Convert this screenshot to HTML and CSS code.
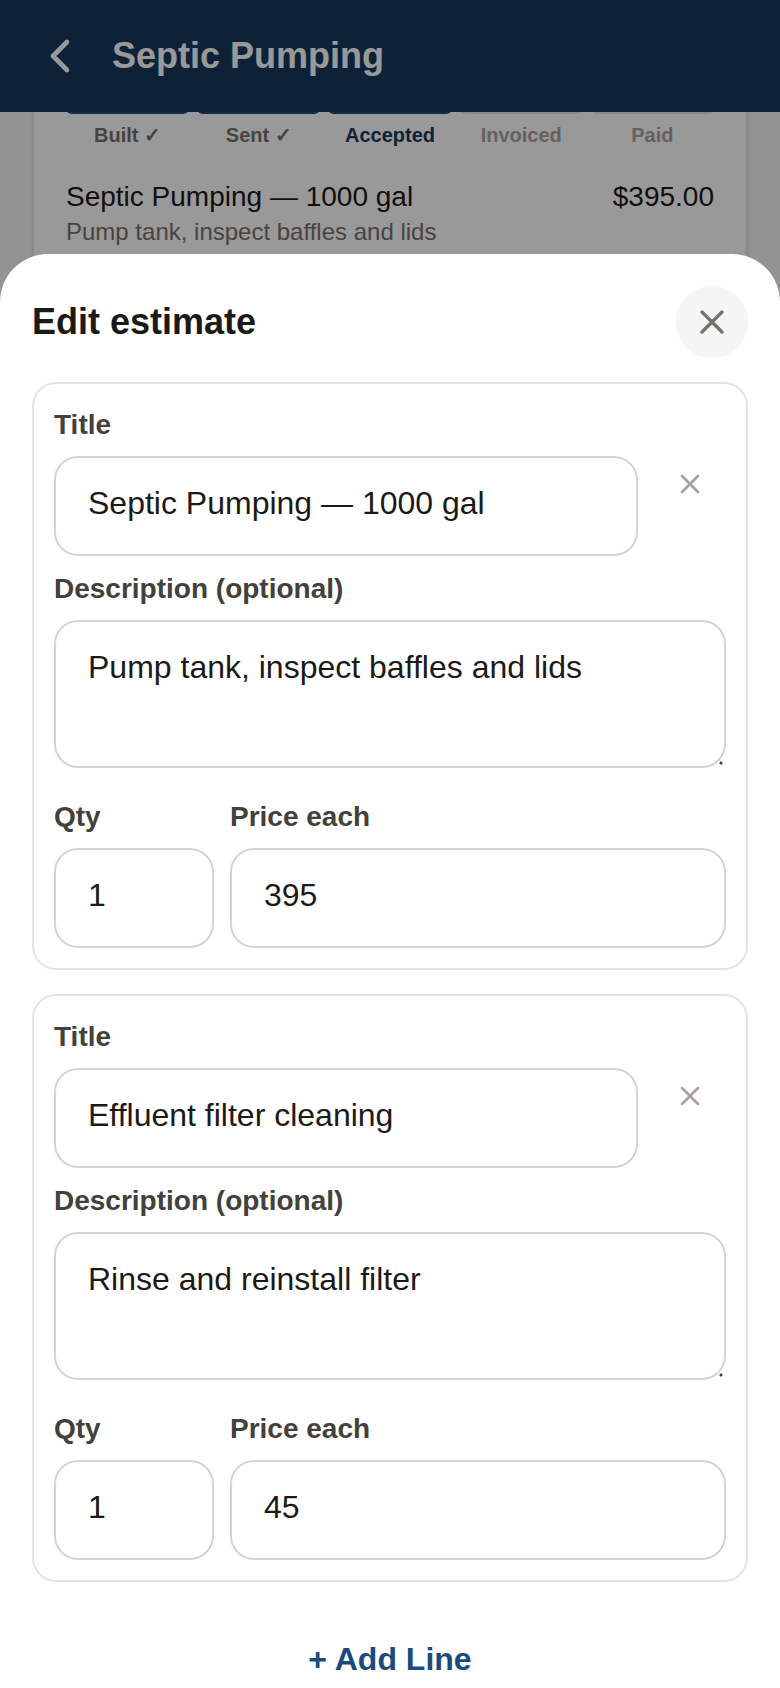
FILE: index.html
```html
<!DOCTYPE html>
<html lang="en">
<head>
    <meta charset="UTF-8">
    <meta name="viewport" content="width=device-width, initial-scale=1.0">
    <title>Septic Pumping</title>
    <link rel="stylesheet" href="styles.css">
</head>
<body>
    <!-- Header -->
    <header class="app-header">
        <button type="button" class="back-btn" aria-label="Back">
            <svg viewBox="0 0 24 24"><path d="M15 18l-6-6 6-6"/></svg>
        </button>
        <h1>Septic Pumping</h1>
    </header>

    <!-- Job card -->
    <main class="job">
        <section class="job-card">
            <ol class="steps">
                <li class="done">Built ✓</li>
                <li class="done">Sent ✓</li>
                <li class="current">Accepted</li>
                <li>Invoiced</li>
                <li>Paid</li>
            </ol>
            <div class="job-line">
                <span>Septic Pumping — 1000 gal</span>
                <span>$395.00</span>
            </div>
            <p class="job-note">Pump tank, inspect baffles and lids</p>
        </section>
    </main>

    <!-- Edit estimate sheet -->
    <div class="overlay">
        <div class="sheet" role="dialog" aria-labelledby="sheetTitle">
            <div class="sheet-header">
                <h2 id="sheetTitle">Edit estimate</h2>
                <button type="button" class="close-btn" aria-label="Close">
                    <svg viewBox="0 0 24 24"><path d="M18 6L6 18M6 6l12 12"/></svg>
                </button>
            </div>

            <form class="lines">
                <div class="line-card">
                    <div class="title-row">
                        <div class="field">
                            <label for="title1">Title</label>
                            <input type="text" id="title1" value="Septic Pumping — 1000 gal">
                        </div>
                        <button type="button" class="remove-btn" aria-label="Remove line">
                            <svg viewBox="0 0 24 24"><path d="M18 6L6 18M6 6l12 12"/></svg>
                        </button>
                    </div>
                    <div class="field">
                        <label for="desc1">Description (optional)</label>
                        <textarea id="desc1" rows="2">Pump tank, inspect baffles and lids</textarea>
                    </div>
                    <div class="price-row">
                        <div class="field">
                            <label for="qty1">Qty</label>
                            <input type="text" inputmode="numeric" id="qty1" value="1">
                        </div>
                        <div class="field">
                            <label for="price1">Price each</label>
                            <input type="text" inputmode="decimal" id="price1" value="395">
                        </div>
                    </div>
                </div>

                <div class="line-card">
                    <div class="title-row">
                        <div class="field">
                            <label for="title2">Title</label>
                            <input type="text" id="title2" value="Effluent filter cleaning">
                        </div>
                        <button type="button" class="remove-btn" aria-label="Remove line">
                            <svg viewBox="0 0 24 24"><path d="M18 6L6 18M6 6l12 12"/></svg>
                        </button>
                    </div>
                    <div class="field">
                        <label for="desc2">Description (optional)</label>
                        <textarea id="desc2" rows="2">Rinse and reinstall filter</textarea>
                    </div>
                    <div class="price-row">
                        <div class="field">
                            <label for="qty2">Qty</label>
                            <input type="text" inputmode="numeric" id="qty2" value="1">
                        </div>
                        <div class="field">
                            <label for="price2">Price each</label>
                            <input type="text" inputmode="decimal" id="price2" value="45">
                        </div>
                    </div>
                </div>

                <button type="button" class="add-btn">+ Add Line</button>
            </form>
        </div>
    </div>
</body>
</html>
```
FILE: styles.css
```css
/* General Styles */
* {
    box-sizing: border-box;
}

body {
    font-family: "Liberation Sans", Arial, sans-serif;
    margin: 0;
    background-color: #f5f5f4;
    color: #1c1917;
}

h1,
h2,
p {
    margin: 0;
}

button,
input,
textarea {
    font-family: inherit;
    color: inherit;
}

button {
    display: flex;
    align-items: center;
    justify-content: center;
    padding: 0;
    border: none;
    background: none;
    cursor: pointer;
}

svg {
    fill: none;
    stroke: currentColor;
    stroke-width: 2;
    stroke-linecap: round;
    stroke-linejoin: round;
}

/* Header */
.app-header {
    position: relative;
    z-index: 1;
    display: flex;
    align-items: center;
    gap: 24px;
    height: 112px;
    padding: 0 32px;
    background-color: #16375c;
    color: white;
}

.app-header h1 {
    font-size: 36px;
    line-height: 48px;
}

.back-btn svg {
    width: 56px;
    height: 56px;
}

/* Job card */
.job {
    padding: 0 32px;
}

.job-card {
    padding: 0 32px 64px;
    border: 2px solid #e7e5e4;
    border-top: none;
    background-color: white;
    box-shadow: 0 2px 4px rgba(0, 0, 0, 0.1);
}

/* The tracker is scrolled up under the header */
.steps {
    display: grid;
    grid-template-columns: repeat(5, 1fr);
    gap: 8px;
    margin: -10px 0 28px;
    padding: 0;
    list-style: none;
    font-size: 20px;
    font-weight: bold;
    line-height: 26px;
    text-align: center;
    color: #a8a29e;
}

.steps li::before {
    content: "";
    display: block;
    height: 12px;
    margin-bottom: 8px;
    border-radius: 6px;
    background-color: #e7e5e4;
}

.steps .done {
    color: #78716c;
}

.steps .current {
    color: #16375c;
}

.steps .done::before,
.steps .current::before {
    background-color: #1a4b7c;
}

.job-line {
    display: flex;
    justify-content: space-between;
    font-size: 28px;
    line-height: 42px;
}

.job-note {
    font-size: 24px;
    line-height: 28px;
    color: #78716c;
}

/* Sheet */
.overlay {
    position: fixed;
    inset: 0;
    z-index: 2;
    padding-top: 254px;
    background-color: rgba(0, 0, 0, 0.4);
}

.sheet {
    height: 100%;
    padding: 32px;
    overflow-y: auto;
    scrollbar-width: none;
    border-radius: 48px 48px 0 0;
    background-color: white;
}

.sheet-header {
    display: flex;
    align-items: center;
    justify-content: space-between;
    margin-bottom: 24px;
}

.sheet-header h2 {
    font-size: 36px;
    line-height: 48px;
}

.close-btn {
    width: 72px;
    height: 72px;
    border-radius: 50%;
    background-color: #f5f5f4;
    color: #78716c;
}

.close-btn svg {
    width: 40px;
    height: 40px;
}

/* Estimate lines */
.lines {
    display: flex;
    flex-direction: column;
    gap: 24px;
}

.line-card {
    padding: 20px;
    border: 2px solid #e5e5e5;
    border-radius: 24px;
}

.title-row,
.price-row {
    display: flex;
    gap: 16px;
}

.title-row {
    margin-bottom: 12px;
}

.price-row {
    margin-top: 28px;
}

.title-row .field,
.price-row .field {
    flex: 1;
}

.price-row .field:first-child {
    flex: 0 0 160px;
}

.field label {
    display: block;
    margin-bottom: 10px;
    font-size: 28px;
    font-weight: bold;
    line-height: 42px;
    color: #44403c;
}

.field input,
.field textarea {
    display: block;
    width: 100%;
    padding: 21px 32px 27px;
    border: 2px solid #d4d4d4;
    border-radius: 24px;
    background-color: white;
    font-size: 32px;
    line-height: 48px;
}

.field input {
    height: 100px;
}

.field textarea {
    resize: vertical;
}

.field textarea::-webkit-resizer {
    background: radial-gradient(circle at 12px 12px, #44403c 1px, transparent 2px);
}

.remove-btn {
    width: 72px;
    height: 72px;
    margin-top: 44px;
    color: #a8a29e;
}

.remove-btn svg {
    width: 32px;
    height: 32px;
}

.add-btn {
    width: 100%;
    height: 106px;
    color: #1a4b7c;
    font-size: 32px;
    font-weight: bold;
}
```
